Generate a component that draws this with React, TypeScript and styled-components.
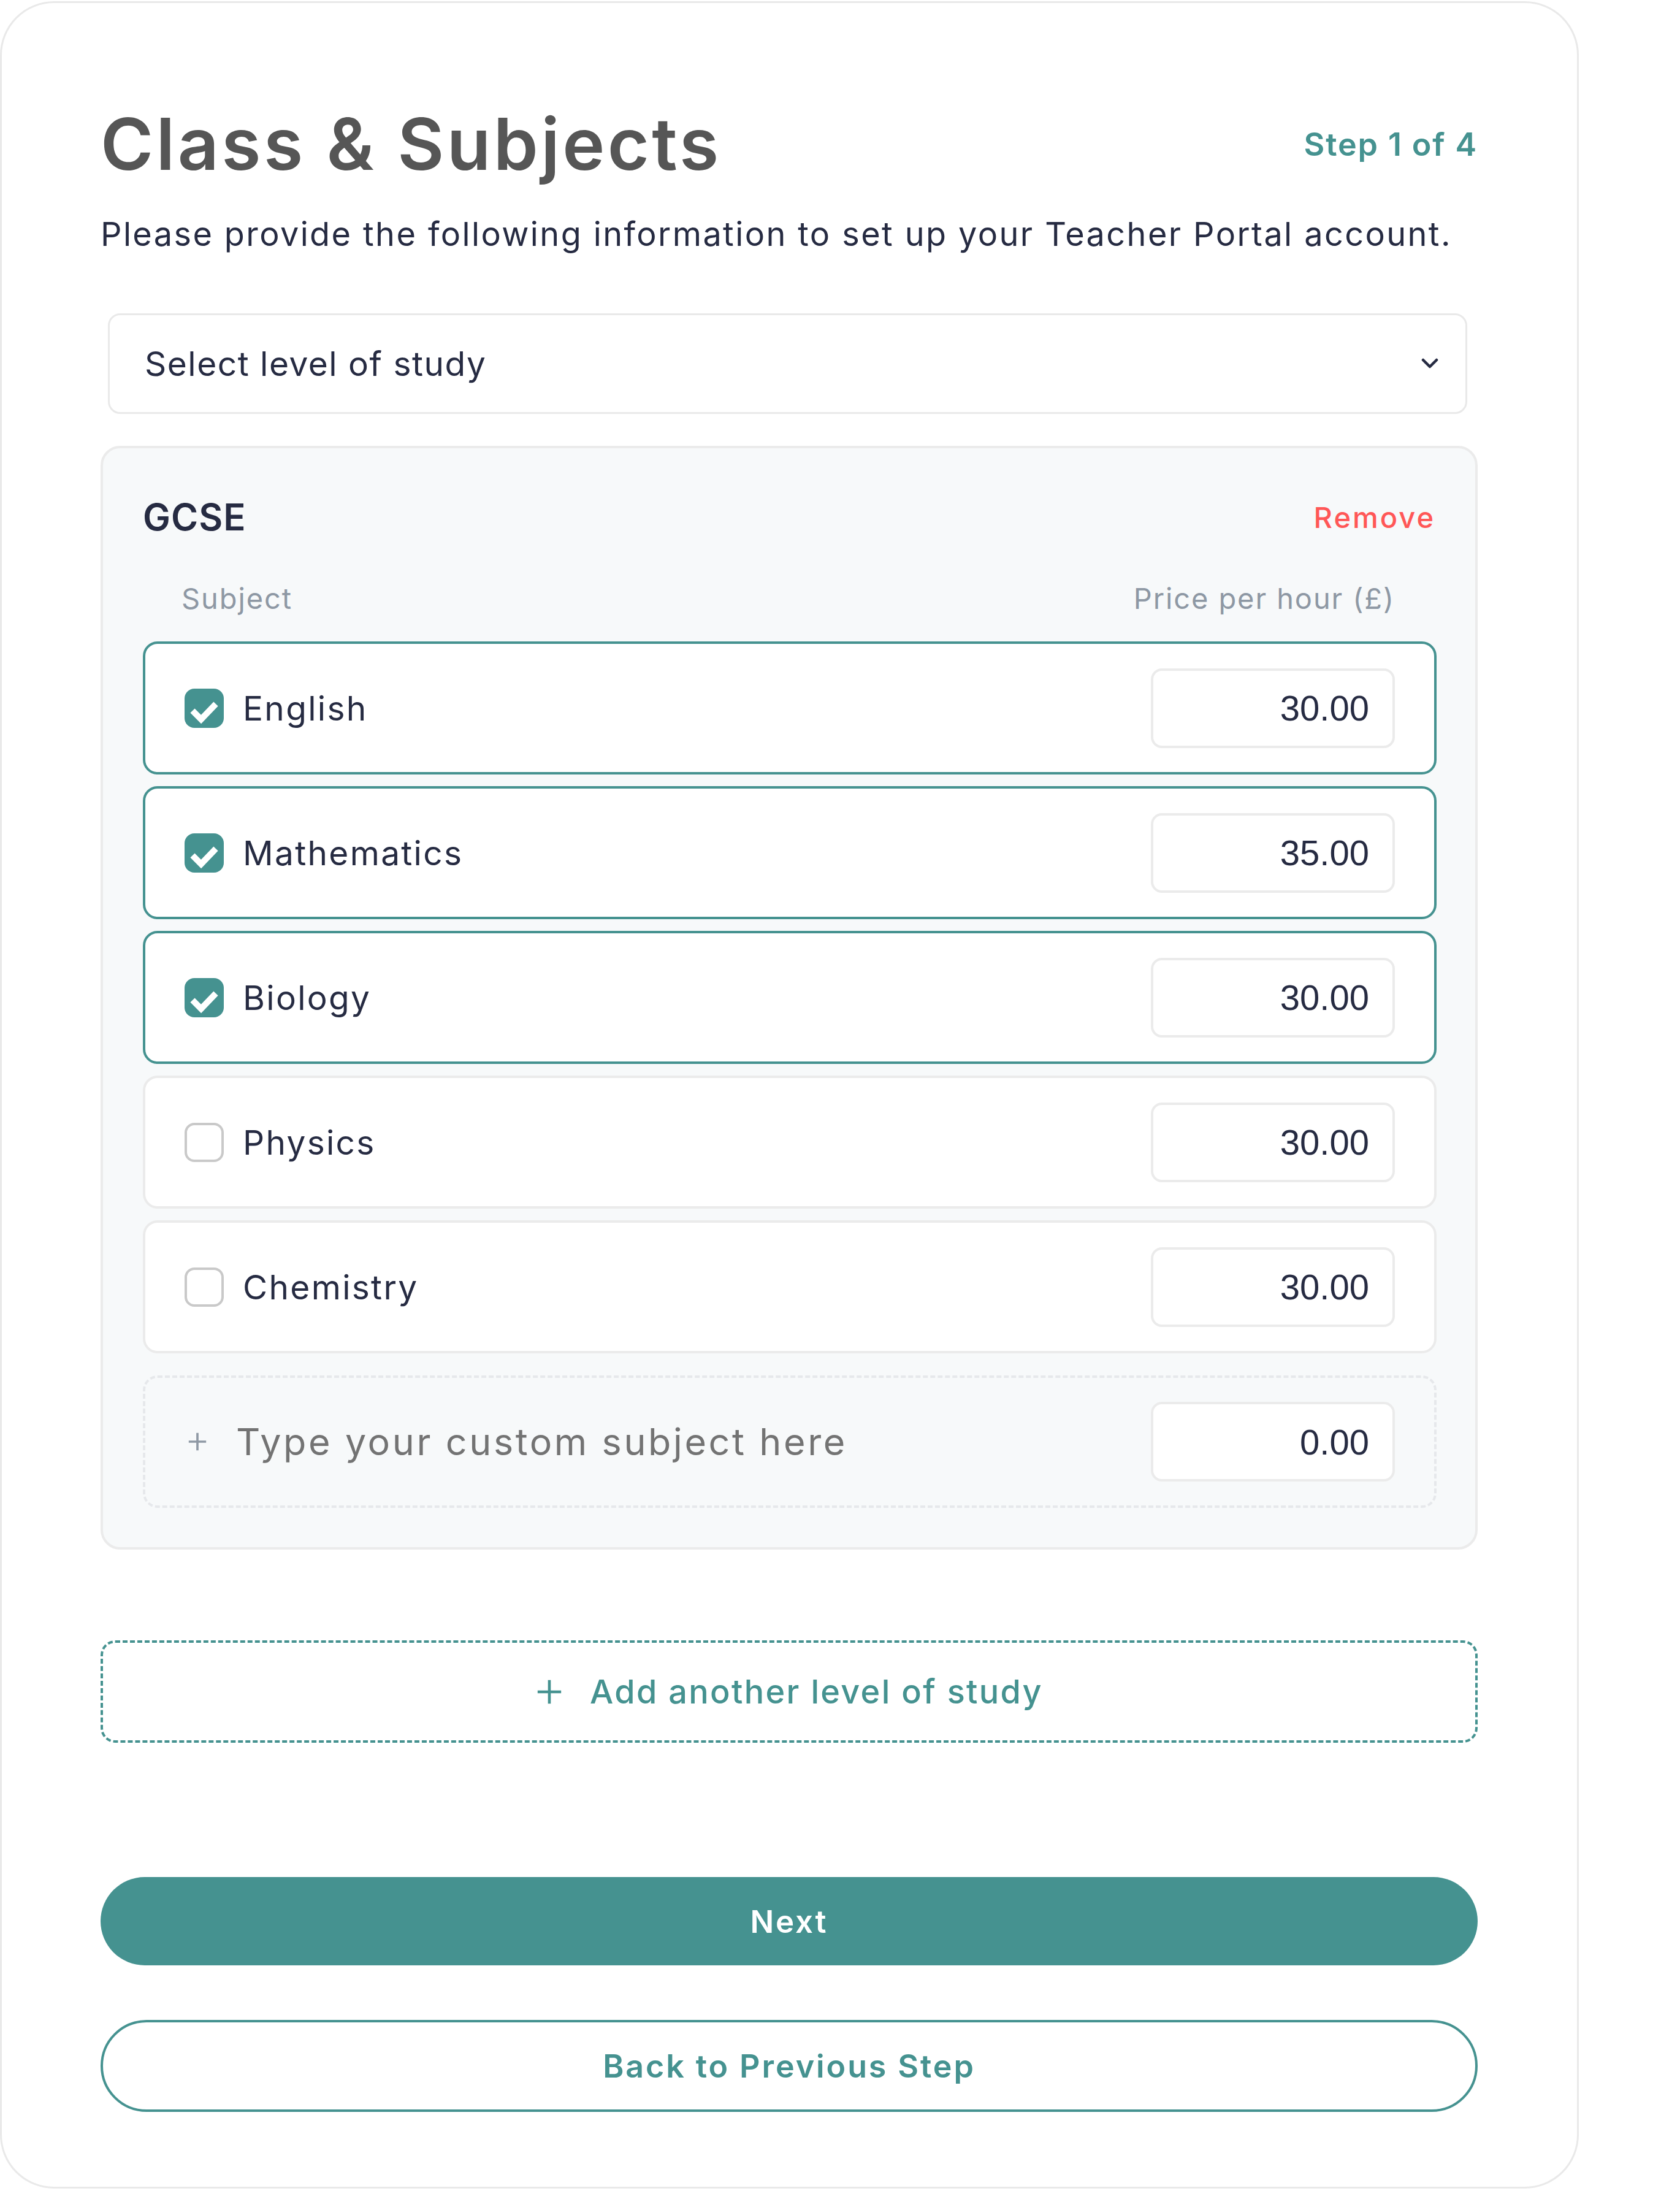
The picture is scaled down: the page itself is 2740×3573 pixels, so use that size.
import React from 'react';
import styled, { createGlobalStyle } from 'styled-components';

const teal = '#459290';
const navy = '#262B42';

type Subject = {
  cd: string;
  name: string;
  price: string;
  checked: boolean;
};

const subjects: Subject[] = [
  { cd: 'eng', name: 'English', price: '30.00', checked: true },
  { cd: 'math', name: 'Mathematics', price: '35.00', checked: true },
  { cd: 'bio', name: 'Biology', price: '30.00', checked: true },
  { cd: 'phy', name: 'Physics', price: '30.00', checked: false },
  { cd: 'chem', name: 'Chemistry', price: '30.00', checked: false },
];

const GlobalStyle = createGlobalStyle`
  html, body {
    margin: 0;
    background: #fff;
  }
  body {
    font-family: 'Inter', 'Noto Sans', sans-serif;
    color: ${navy};
  }
`;

const PlusIcon: React.FC<{ size: number; color: string; stroke: number }> = (p) => (
  <svg
    width={p.size}
    height={p.size}
    viewBox='0 0 24 24'
    fill='none'
    stroke={p.color}
    strokeWidth={p.stroke}
  >
    <path d='M12 2v20M2 12h20' />
  </svg>
);

const Chevron = () => (
  <svg
    width='28'
    height='18'
    viewBox='0 0 28 18'
    fill='none'
    stroke={navy}
    strokeWidth='4.5'
    strokeLinecap='round'
    strokeLinejoin='round'
  >
    <path d='M3 3l11 11L25 3' />
  </svg>
);

export default function App() {
  return (
    <>
      <GlobalStyle />
      <Card>
        <Header>
          <Title>Class &amp; Subjects</Title>
          <StepLabel>Step 1 of 4</StepLabel>
        </Header>
        <Intro>Please provide the following information to set up your Teacher Portal account.</Intro>

        <SelectBox>
          <span>Select level of study</span>
          <Chevron />
        </SelectBox>

        <LevelBox>
          <LevelHeader>
            <LevelName>GCSE</LevelName>
            <RemoveButton type='button'>Remove</RemoveButton>
          </LevelHeader>
          <ColumnLabels>
            <span>Subject</span>
            <span>Price per hour (£)</span>
          </ColumnLabels>

          <RowList>
            {subjects.map((s) => (
              <SubjectRow
                key={s.cd}
                $checked={s.checked}
              >
                <CheckBox $checked={s.checked}>
                  {s.checked && (
                    <svg
                      width='64'
                      height='64'
                      viewBox='0 0 64 64'
                      fill='none'
                      stroke='#fff'
                      strokeWidth='10'
                    >
                      <path d='M13 36l14 14 24-25' />
                    </svg>
                  )}
                </CheckBox>
                <SubjectName>{s.name}</SubjectName>
                <PriceInput
                  defaultValue={s.price}
                  readOnly
                />
              </SubjectRow>
            ))}
            <CustomRow>
              <PlusIcon
                size={34}
                color='#8E98A4'
                stroke={2.6}
              />
              <CustomInput placeholder='Type your custom subject here' />
              <PriceInput
                defaultValue='0.00'
                readOnly
              />
            </CustomRow>
          </RowList>
        </LevelBox>

        <AddLevelButton type='button'>
          <PlusIcon
            size={46}
            color={teal}
            stroke={2.4}
          />
          <span>Add another level of study</span>
        </AddLevelButton>

        <NextButton type='button'>Next</NextButton>
        <BackButton type='button'>Back to Previous Step</BackButton>
      </Card>
    </>
  );
}

const Card = styled.main`
  box-sizing: border-box;
  width: 2575px;
  margin-top: 2px;
  border: 3px solid #e9e9e9;
  border-radius: 88px;
  padding: 158px 162px 122px 161px;
  background: #fff;
  display: flex;
  flex-direction: column;
`;

const Header = styled.div`
  display: flex;
  justify-content: space-between;
  align-items: center;
`;

const Title = styled.h1`
  margin: 0;
  font-size: 117px;
  line-height: 144px;
  font-weight: 600;
  color: #565656;
  letter-spacing: 4.4px;
`;

const StepLabel = styled.span`
  font-size: 52px;
  font-weight: 600;
  color: ${teal};
  letter-spacing: 1.9px;
`;

const Intro = styled.p`
  margin: 34px 0 0;
  font-size: 54px;
  line-height: 81px;
  font-weight: 400;
  color: ${navy};
  letter-spacing: 2.4px;
`;

const SelectBox = styled.div`
  box-sizing: border-box;
  height: 164px;
  margin: 89px 17px 0 12px;
  border: 3px solid #e9e9e9;
  border-radius: 20px;
  padding: 0 44px 0 57px;
  display: flex;
  align-items: center;
  justify-content: space-between;
  font-size: 55px;
  color: ${navy};
  letter-spacing: 1.5px;
`;

const LevelBox = styled.section`
  margin-top: 52px;
  border: 4px solid #ebebeb;
  border-radius: 32px;
  background: #f7f9fa;
  padding: 64px 63px 64px 65px;
  display: flex;
  flex-direction: column;
`;

const LevelHeader = styled.div`
  height: 96px;
  display: flex;
  justify-content: space-between;
  align-items: center;
  padding-right: 2px;
`;

const LevelName = styled.h2`
  margin: 0;
  font-size: 60px;
  font-weight: 600;
  color: ${navy};
  letter-spacing: 1px;
`;

const RemoveButton = styled.button`
  border: none;
  background: none;
  padding: 0;
  font-family: inherit;
  font-size: 47px;
  font-weight: 500;
  color: #ff5757;
  letter-spacing: 3px;
`;

const ColumnLabels = styled.div`
  margin-top: 50px;
  display: flex;
  justify-content: space-between;
  padding: 0 68px 0 63px;
  font-size: 47px;
  line-height: 70px;
  color: #8e98a4;
  letter-spacing: 1.9px;
`;

const RowList = styled.div`
  margin-top: 35px;
  display: flex;
  flex-direction: column;
  gap: 19px;
`;

const SubjectRow = styled.div<{ $checked: boolean }>`
  box-sizing: border-box;
  height: 217px;
  border: 4px solid ${(p) => (p.$checked ? teal : '#ebebeb')};
  border-radius: 24px;
  background: #fff;
  padding: 0 64px;
  display: flex;
  align-items: center;
`;

const CheckBox = styled.span<{ $checked: boolean }>`
  box-sizing: border-box;
  width: 64px;
  height: 64px;
  flex-shrink: 0;
  border-radius: 16px;
  margin-right: 31px;
  background: ${(p) => (p.$checked ? teal : '#fff')};
  border: ${(p) => (p.$checked ? 'none' : '4px solid #c9c9c9')};
  display: flex;
`;

const SubjectName = styled.span`
  flex: 1;
  font-size: 55px;
  color: ${navy};
  letter-spacing: 2.3px;
`;

const PriceInput = styled.input`
  box-sizing: border-box;
  width: 398px;
  height: 130px;
  flex-shrink: 0;
  border: 4px solid #ebebeb;
  border-radius: 18px;
  padding: 0 38px;
  background: #fff;
  text-align: right;
  font-family: 'Liberation Sans', Arial, sans-serif;
  font-size: 58px;
  color: ${navy};
  outline: none;
`;

const CustomRow = styled.div`
  box-sizing: border-box;
  height: 216px;
  margin-top: 17px;
  border: 4px dashed #e6e8eb;
  border-radius: 24px;
  padding: 0 64px 0 68px;
  display: flex;
  align-items: center;
`;

const CustomInput = styled.input`
  flex: 1;
  min-width: 0;
  margin-left: 46px;
  border: none;
  background: transparent;
  padding: 0;
  font-family: inherit;
  font-size: 61px;
  color: ${navy};
  letter-spacing: 3.6px;
  outline: none;

  &::placeholder {
    color: #737373;
  }
`;

const AddLevelButton = styled.button`
  box-sizing: border-box;
  height: 167px;
  margin-top: 148px;
  border: 4px dashed ${teal};
  border-radius: 24px;
  background: #fff;
  display: flex;
  align-items: center;
  justify-content: center;
  gap: 43px;
  font-family: inherit;
  font-size: 54px;
  font-weight: 500;
  color: ${teal};
  letter-spacing: 2.3px;
`;

const NextButton = styled.button`
  height: 144px;
  margin-top: 219px;
  border: none;
  border-radius: 999px;
  background: ${teal};
  font-family: inherit;
  font-size: 51px;
  font-weight: 600;
  color: #fff;
  letter-spacing: 2.8px;
`;

const BackButton = styled.button`
  box-sizing: border-box;
  height: 150px;
  margin-top: 89px;
  border: 4px solid ${teal};
  border-radius: 999px;
  background: #fff;
  font-family: inherit;
  font-size: 52px;
  font-weight: 600;
  color: ${teal};
  letter-spacing: 2.9px;
`;
